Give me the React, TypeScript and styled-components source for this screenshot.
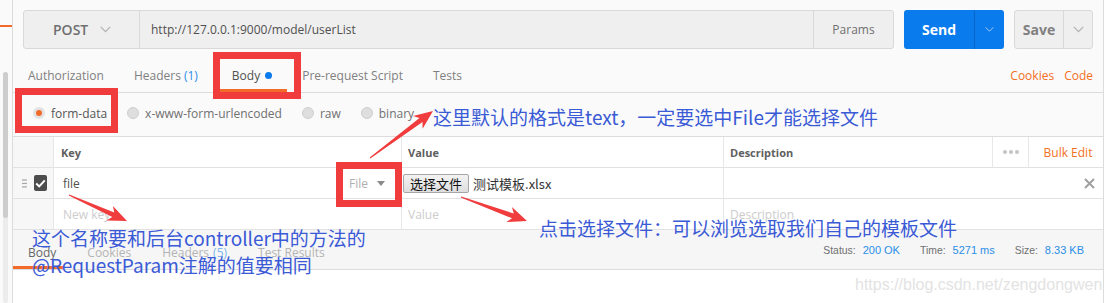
import React from 'react';
import styled, { createGlobalStyle, css } from 'styled-components';

const Global = createGlobalStyle`
  html, body { margin: 0; padding: 0; background: #fff; }
  body { font-family: "Open Sans", "Noto Sans CJK SC", sans-serif; }
  * { box-sizing: border-box; }
`;

const ORANGE = '#f47023';
const BLUE = '#2a8ee8';
const RED = '#f03c3c';
const INK = '#3a5ad6';

const Page = styled.div`
  position: relative;
  width: 1108px;
  height: 303px;
  overflow: hidden;
  display: flex;
  background: #fff;
`;

const SideStrip = styled.div`
  width: 13px;
  flex: none;
  border-right: 1px solid #dcdcdc;
  background: #fafafa;
  display: flex;
  flex-direction: column;
  padding-top: 25px;
`;
const SideAccent = styled.div`
  width: 12px;
  height: 2px;
  background: #f26b2a;
`;
const ScrollTrack = styled.div`
  margin: 45px 0 0 3px;
  width: 5px;
  flex: 1;
  background: #ececec;
  border-radius: 3px;
`;
const ScrollThumb = styled.div`
  height: 146px;
  background: #cdcdcd;
  border-radius: 3px;
`;

const Main = styled.div`
  width: 1091px;
  flex: none;
  border-right: 1px solid #dcdcdc;
  background: #fafafa;
  display: flex;
  flex-direction: column;
`;

/* ---------- request bar ---------- */
const RequestBar = styled.div`
  height: 49px;
  padding: 10px 10px 0;
  display: flex;
  gap: 10px;
`;
const UrlGroup = styled.div`
  flex: 1;
  height: 39px;
  display: flex;
  border: 1px solid #d9d9d9;
  border-radius: 3px;
  background: #efefef;
`;
const MethodBox = styled.div`
  width: 116px;
  flex: none;
  display: flex;
  align-items: center;
  gap: 12px;
  padding-left: 29px;
  border-right: 1px solid #d9d9d9;
  font-size: 14px;
  font-weight: 600;
  color: #707070;
`;
const UrlText = styled.div`
  flex: 1;
  display: flex;
  align-items: center;
  padding-left: 11px;
  font-size: 12px;
  color: #505050;
`;
const ParamsBox = styled.div`
  width: 80px;
  flex: none;
  display: flex;
  align-items: center;
  justify-content: center;
  border-left: 1px solid #d9d9d9;
  font-size: 12px;
  color: #707070;
`;
const SplitButton = styled.div<{ $primary?: boolean; $w: number; $main: number }>`
  width: ${p => p.$w}px;
  height: 39px;
  flex: none;
  display: grid;
  grid-template-columns: ${p => p.$main}px 1fr;
  border-radius: 3px;
  font-size: 14px;
  font-weight: 700;
  ${p =>
    p.$primary
      ? css`
          background: #097bed;
          color: #fff;
        `
      : css`
          background: #efefef;
          color: #808080;
          border: 1px solid #d9d9d9;
        `}
`;
const SplitMain = styled.div<{ $primary?: boolean }>`
  display: flex;
  align-items: center;
  justify-content: center;
  border-right: 1px solid ${p => (p.$primary ? '#0866c6' : '#d9d9d9')};
`;
const SplitCaret = styled.div`
  display: flex;
  align-items: center;
  justify-content: center;
`;

const Chevron = ({ color, w = 11 }: { color: string; w?: number }) => (
  <svg width={w} height={7} viewBox="0 0 11 7">
    <polyline points="0.8,0.8 5.5,5.6 10.2,0.8" fill="none" stroke={color} strokeWidth="1.2" />
  </svg>
);

/* ---------- tabs ---------- */
const TabsRow = styled.div`
  height: 44px;
  display: flex;
  align-items: stretch;
  padding-right: 10px;
  border-bottom: 1px solid #dcdcdc;
`;
const Tab = styled.div<{ $active?: boolean }>`
  position: relative;
  display: flex;
  align-items: center;
  gap: 5px;
  padding: 9px 15px 0;
  font-size: 12px;
  color: ${p => (p.$active ? '#505050' : '#808080')};
  ${p =>
    p.$active &&
    css`
      &::after {
        content: '';
        position: absolute;
        left: 0;
        right: 0;
        bottom: 0;
        height: 3px;
        background: #f26b2a;
      }
    `}
`;
const Count = styled.span`
  color: ${BLUE};
  margin: 0 4px 0 3px;
`;
const Dot = styled.span`
  width: 7px;
  height: 7px;
  border-radius: 50%;
  background: #097bed;
`;
const TabLinks = styled.div`
  margin-left: auto;
  display: flex;
  align-items: center;
  gap: 10px;
  padding-top: 9px;
  font-size: 12px;
  color: ${ORANGE};
`;

/* ---------- body types ---------- */
const BodyTypes = styled.div`
  height: 44px;
  display: flex;
  align-items: center;
  gap: 20px;
  padding: 0 0 3px 20px;
  border-bottom: 1px solid #dcdcdc;
`;
const RadioOption = styled.div<{ $active?: boolean }>`
  display: flex;
  align-items: center;
  gap: 6px;
  font-size: 12px;
  color: ${p => (p.$active ? '#555' : '#707070')};
`;
const RadioCircle = styled.span<{ $active?: boolean }>`
  width: 12px;
  height: 12px;
  border-radius: 50%;
  background: ${p => (p.$active ? '#f26b2a' : '#dedede')};
  border: ${p => (p.$active ? '3px solid #e2e2e2' : '1px solid #cfcfcf')};
`;

/* ---------- table ---------- */
const Table = styled.div`
  display: grid;
  grid-template-columns: 41px 348px 322px 269px 36px 1fr;
  grid-auto-rows: 31px;
  background: #fff;
`;
const Cell = styled.div<{ $span?: number; $side?: boolean; $last?: boolean }>`
  grid-column: span ${p => p.$span || 1};
  display: flex;
  align-items: center;
  padding: 0 6px;
  border-bottom: 1px solid #e2e2e2;
  border-right: ${p => (p.$last ? 'none' : '1px solid #e8e8e8')};
  background: ${p => (p.$side ? '#f7f7f7' : '#fff')};
  font-size: 12px;
  color: #505050;
`;
const HeadText = styled.span`
  font-size: 11px;
  font-weight: 700;
  color: #606060;
`;
const KeyHead = styled(Cell)`
  padding-left: 7px;
`;
const KeyCell = styled(Cell)`
  justify-content: space-between;
  padding: 0 16px 0 9px;
`;
const CheckCell = styled(Cell)`
  gap: 7px;
  padding-left: 9px;
`;
const Placeholder = styled.span<{ $indent?: number }>`
  color: #cccccc;
  padding-left: ${p => p.$indent || 0}px;
`;
const TypeSelect = styled.span`
  display: flex;
  align-items: center;
  gap: 9px;
  color: #b0b0b0;
`;
const CheckBox = styled.span`
  width: 16px;
  height: 16px;
  border-radius: 2px;
  background: #4d4d4d;
  display: flex;
  align-items: center;
  justify-content: center;
`;
const FileButton = styled.span`
  height: 19px;
  padding: 0 6px;
  display: flex;
  align-items: center;
  border: 1px solid #a6a6a6;
  border-radius: 2px;
  background: linear-gradient(#f3f3f3, #dedede);
  font-family: "Noto Sans CJK SC", sans-serif;
  font-size: 13px;
  color: #111;
  margin-left: -5px;
`;
const FileName = styled.span`
  margin-left: 4px;
  font-family: "Noto Sans CJK SC", sans-serif;
  font-size: 13px;
  color: #333;
`;
const DescCell = styled(Cell)`
  justify-content: space-between;
  padding-right: 8px;
`;
const Dots = styled(Cell)`
  justify-content: center;
  gap: 2px;
`;
const MiniDot = styled.span`
  width: 4px;
  height: 4px;
  border-radius: 50%;
  background: #c4c4c4;
`;
const BulkEdit = styled(Cell)`
  justify-content: center;
  color: ${ORANGE};
  padding: 0 0 0 4px;
`;

/* ---------- response ---------- */
const ResponseBar = styled.div`
  height: 40px;
  display: flex;
  align-items: stretch;
  padding-right: 19px;
  background: #f6f6f6;
  border-bottom: 1px solid #dcdcdc;
`;
const ResTabs = styled.div`
  display: flex;
  gap: 9px;
`;
const ResTab = styled.div<{ $active?: boolean }>`
  position: relative;
  display: flex;
  align-items: center;
  padding: 5px 7px 0 15px;
  font-size: 12px;
  color: ${p => (p.$active ? '#666' : '#b4b4b4')};
  ${p =>
    p.$active &&
    css`
      &::after {
        content: '';
        position: absolute;
        left: 0;
        right: 0;
        bottom: 0;
        height: 3px;
        background: #f26b2a;
      }
    `}
`;
const FadedCount = styled.span`
  color: #7fb8ee;
  margin-left: 4px;
`;
const Stats = styled.div`
  margin-left: auto;
  display: flex;
  align-items: center;
  gap: 20px;
  font-family: "Liberation Sans", Arial, sans-serif;
  font-size: 11px;
`;
const Stat = styled.span`
  display: flex;
  align-items: baseline;
  gap: 7px;
  color: #707070;
  font-size: 10.4px;
`;
const StatValue = styled.span`
  color: ${BLUE};
  font-size: 11px;
`;
const BottomArea = styled.div`
  flex: 1;
  background: #fff;
`;

/* ---------- overlays ---------- */
const Overlay = styled.div`
  position: absolute;
  inset: 0;
  pointer-events: none;
`;
const RedBox = styled.div<{ $x: number; $y: number; $w: number; $h: number }>`
  position: absolute;
  left: ${p => p.$x}px;
  top: ${p => p.$y}px;
  width: ${p => p.$w}px;
  height: ${p => p.$h}px;
  border: 7px solid ${RED};
`;
const Note = styled.div<{ $x: number; $y: number; $size?: number }>`
  position: absolute;
  left: ${p => p.$x}px;
  top: ${p => p.$y}px;
  font-family: "Noto Sans CJK SC", sans-serif;
  font-size: ${p => p.$size || 19}px;
  line-height: 27px;
  color: ${INK};
  white-space: nowrap;
`;
const Watermark = styled.div`
  position: absolute;
  left: 855px;
  top: 276px;
  font-family: "Liberation Sans", Arial, sans-serif;
  font-size: 16px;
  color: #e3e3e3;
`;
const ArrowLayer = styled.svg`
  position: absolute;
  left: 0;
  top: 0;
`;

function arrowPoints(x1: number, y1: number, x2: number, y2: number) {
  const dx = x2 - x1;
  const dy = y2 - y1;
  const L = Math.hypot(dx, dy);
  const ux = dx / L;
  const uy = dy / L;
  const nx = -uy;
  const ny = ux;
  const headLen = 19;
  const headW = 16;
  const shaftW = 5;
  const tailW = 1;
  const bx = x2 - ux * (headLen - 4);
  const by = y2 - uy * (headLen - 4);
  const wx = x2 - ux * headLen;
  const wy = y2 - uy * headLen;
  const pts: [number, number][] = [
    [x1 + (nx * tailW) / 2, y1 + (ny * tailW) / 2],
    [bx + (nx * shaftW) / 2, by + (ny * shaftW) / 2],
    [wx + (nx * headW) / 2, wy + (ny * headW) / 2],
    [x2, y2],
    [wx - (nx * headW) / 2, wy - (ny * headW) / 2],
    [bx - (nx * shaftW) / 2, by - (ny * shaftW) / 2],
    [x1 - (nx * tailW) / 2, y1 - (ny * tailW) / 2],
  ];
  return pts.map(p => `${p[0].toFixed(1)},${p[1].toFixed(1)}`).join(' ');
}

const arrows = [
  [370, 158, 433, 111],
  [69, 195, 127, 221],
  [461, 197, 527, 221],
];

const Handle = () => (
  <svg width="6" height="11" viewBox="0 0 6 11">
    <rect x="0" y="0.5" width="6" height="1.5" fill="#a5a5a5" />
    <rect x="0" y="4.7" width="6" height="1.5" fill="#a5a5a5" />
    <rect x="0" y="8.9" width="6" height="1.5" fill="#a5a5a5" />
  </svg>
);

const Tick = () => (
  <svg width="11" height="9" viewBox="0 0 11 9">
    <polyline points="1.2,4.6 4.2,7.4 9.8,1.4" fill="none" stroke="#fff" strokeWidth="2" />
  </svg>
);

const Caret = () => (
  <svg width="8" height="5" viewBox="0 0 8 5">
    <polygon points="0,0 8,0 4,5" fill="#8a8a8a" />
  </svg>
);

const Close = () => (
  <svg width="11" height="11" viewBox="0 0 11 11">
    <path d="M1 1 L10 10 M10 1 L1 10" stroke="#a0a0a0" strokeWidth="2" />
  </svg>
);

export default function App() {
  return (
    <>
      <Global />
      <Page>
        <SideStrip>
          <SideAccent />
          <ScrollTrack>
            <ScrollThumb />
          </ScrollTrack>
        </SideStrip>
        <Main>
          <RequestBar>
            <UrlGroup>
              <MethodBox>
                POST
                <Chevron color="#b0b0b0" />
              </MethodBox>
              <UrlText>http://127.0.0.1:9000/model/userList</UrlText>
              <ParamsBox>Params</ParamsBox>
            </UrlGroup>
            <SplitButton $primary $w={100} $main={71}>
              <SplitMain $primary>Send</SplitMain>
              <SplitCaret>
                <Chevron color="#a9cff7" w={9} />
              </SplitCaret>
            </SplitButton>
            <SplitButton $w={79} $main={49}>
              <SplitMain>Save</SplitMain>
              <SplitCaret>
                <Chevron color="#b0b0b0" />
              </SplitCaret>
            </SplitButton>
          </RequestBar>

          <TabsRow>
            <Tab>Authorization</Tab>
            <Tab>
              <span>
                Headers<Count>(1)</Count>
              </span>
            </Tab>
            <Tab $active>
              Body
              <Dot />
            </Tab>
            <Tab>Pre-request Script</Tab>
            <Tab>Tests</Tab>
            <TabLinks>
              <span>Cookies</span>
              <span>Code</span>
            </TabLinks>
          </TabsRow>

          <BodyTypes>
            <RadioOption $active>
              <RadioCircle $active />
              form-data
            </RadioOption>
            <RadioOption>
              <RadioCircle />
              x-www-form-urlencoded
            </RadioOption>
            <RadioOption>
              <RadioCircle />
              raw
            </RadioOption>
            <RadioOption>
              <RadioCircle />
              binary
            </RadioOption>
          </BodyTypes>

          <Table>
            <Cell $side />
            <KeyHead>
              <HeadText>Key</HeadText>
            </KeyHead>
            <Cell>
              <HeadText>Value</HeadText>
            </Cell>
            <Cell>
              <HeadText>Description</HeadText>
            </Cell>
            <Dots>
              <MiniDot />
              <MiniDot />
              <MiniDot />
            </Dots>
            <BulkEdit $last>Bulk Edit</BulkEdit>

            <CheckCell $side>
              <Handle />
              <CheckBox>
                <Tick />
              </CheckBox>
            </CheckCell>
            <KeyCell>
              <span>file</span>
              <TypeSelect>
                File
                <Caret />
              </TypeSelect>
            </KeyCell>
            <Cell>
              <FileButton>选择文件</FileButton>
              <FileName>测试模板.xlsx</FileName>
            </Cell>
            <DescCell $span={3} $last>
              <span />
              <Close />
            </DescCell>

            <Cell $side />
            <Cell>
              <Placeholder $indent={3}>New key</Placeholder>
            </Cell>
            <Cell>
              <Placeholder>Value</Placeholder>
            </Cell>
            <Cell $span={3} $last>
              <Placeholder>Description</Placeholder>
            </Cell>
          </Table>

          <ResponseBar>
            <ResTabs>
              <ResTab $active>Body</ResTab>
              <ResTab>Cookies</ResTab>
              <ResTab>
                Headers<FadedCount>(5)</FadedCount>
              </ResTab>
              <ResTab>Test Results</ResTab>
            </ResTabs>
            <Stats>
              <Stat>
                Status:<StatValue>200 OK</StatValue>
              </Stat>
              <Stat>
                Time:<StatValue>5271 ms</StatValue>
              </Stat>
              <Stat>
                Size:<StatValue>8.33 KB</StatValue>
              </Stat>
            </Stats>
          </ResponseBar>
          <BottomArea />
        </Main>

        <Overlay>
          <Watermark>https://blog.csdn.net/zengdongwen</Watermark>
          <RedBox $x={213} $y={52} $w={88} $h={47} />
          <RedBox $x={15} $y={88} $w={103} $h={45} />
          <RedBox $x={336} $y={162} $w={66} $h={45} />
          <ArrowLayer width="1108" height="303" viewBox="0 0 1108 303">
            {arrows.map((a, i) => (
              <polygon key={i} points={arrowPoints(a[0], a[1], a[2], a[3])} fill={RED} />
            ))}
          </ArrowLayer>
          <Note $x={433} $y={103}>这里默认的格式是text，一定要选中File才能选择文件</Note>
          <Note $x={539} $y={214}>点击选择文件：可以浏览选取我们自己的模板文件</Note>
          <Note $x={32} $y={224}>
            这个名称要和后台controller中的方法的
            <br />
            @RequestParam注解的值要相同
          </Note>
        </Overlay>
      </Page>
    </>
  );
}
